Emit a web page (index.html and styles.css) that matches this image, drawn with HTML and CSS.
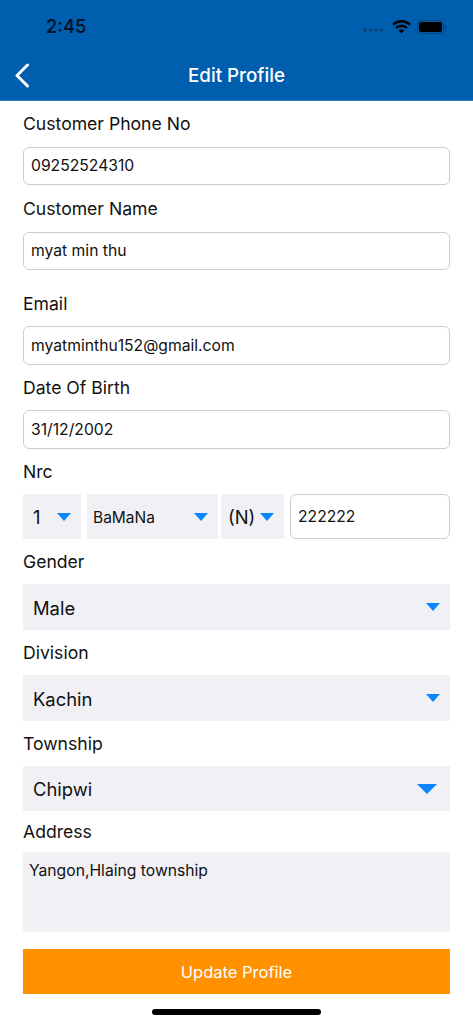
FILE: index.html
```html
<!DOCTYPE html>
<html lang="en">
<head>
<meta charset="utf-8">
<title>Edit Profile</title>
<link rel="stylesheet" href="styles.css">
</head>
<body>
<div class="screen">
  <header class="header">
    <div class="status">
      <span class="time">2:45</span>
      <div class="status-icons">
        <svg class="signal" width="21" height="4" viewBox="0 0 21 4"><g fill="#0f3f72"><circle cx="2" cy="2" r="1.7"/><circle cx="7.5" cy="2" r="1.7"/><circle cx="13" cy="2" r="1.7"/><circle cx="18.5" cy="2" r="1.7"/></g></svg>
        <svg class="wifi" width="19" height="14" viewBox="0 0 19 14"><path d="M1 4.7a12.2 12.2 0 0 1 17 0" fill="none" stroke="#000" stroke-width="2.4"/><path d="M4 8a8 8 0 0 1 11 0" fill="none" stroke="#000" stroke-width="2.4"/><path d="M9.5 13.6 6.6 10.6a4.2 4.2 0 0 1 5.8 0z" fill="#000"/></svg>
        <svg class="battery" width="30" height="14" viewBox="0 0 30 14"><rect x=".5" y=".5" width="26" height="13" rx="3.6" fill="none" stroke="#0f3f72"/><rect x="2" y="2" width="23" height="10" rx="2.2" fill="#000"/><rect x="27.8" y="5" width="1.5" height="4" rx=".7" fill="#0f3f72"/></svg>
      </div>
    </div>
    <div class="navbar">
      <svg class="back" width="16" height="25" viewBox="0 0 16 25"><path d="M13.5 2 3 12.5 13.5 23" fill="none" stroke="#fff" stroke-width="3" stroke-linecap="round" stroke-linejoin="round"/></svg>
      <h1 class="title">Edit Profile</h1>
    </div>
  </header>

  <form class="form">
    <label class="label l-first">Customer Phone No</label>
    <div class="input">09252524310</div>
    <label class="label l-name">Customer Name</label>
    <div class="input">myat min thu</div>
    <label class="label l-email">Email</label>
    <div class="input i-tall">myatminthu152@gmail.com</div>
    <label class="label l-dob">Date Of Birth</label>
    <div class="input i-tall">31/12/2002</div>
    <label class="label l-dob">Nrc</label>
    <div class="nrc">
      <div class="select s-num"><span class="val">1</span><i class="arrow"></i></div>
      <div class="select s-town"><span class="val small">BaMaNa</span><i class="arrow"></i></div>
      <div class="select s-type"><span class="val">(N)</span><i class="arrow"></i></div>
      <div class="input i-nrc">222222</div>
    </div>
    <label class="label l-gender">Gender</label>
    <div class="select s-full"><span class="val">Male</span><i class="arrow"></i></div>
    <label class="label l-gender">Division</label>
    <div class="select s-full"><span class="val">Kachin</span><i class="arrow"></i></div>
    <label class="label l-gender">Township</label>
    <div class="select s-full s-short"><span class="val">Chipwi</span><i class="arrow arrow-big"></i></div>
    <label class="label l-address">Address</label>
    <div class="textarea">Yangon,Hlaing township</div>
    <button class="submit" type="button">Update Profile</button>
  </form>
  <div class="home-wrap"><div class="home-bar"></div></div>
</div>
</body>
</html>
```
FILE: styles.css
```css
* { box-sizing: border-box; }
html, body { margin: 0; padding: 0; background: #fff; }
body { font-family: Inter, "Liberation Sans", sans-serif; color: #111; }
.screen { width: 473px; height: 1024px; overflow: hidden; display: flex; flex-direction: column; }

.header { height: 101px; background: #005eae; border-bottom: 1px solid #2a7cc0; flex: none; }
.status { height: 52px; display: flex; align-items: center; justify-content: space-between; padding: 0 26px 0 46px; }
.time { font-size: 18px; font-weight: 600; color: #05152a; }
.status-icons { display: flex; align-items: center; padding-top: 2px; }
.signal { margin: 5px 8px 0 0; }
.wifi { margin: -1px 6px 0 0; }
.navbar { height: 48px; display: flex; align-items: center; justify-content: center; position: relative; }
.back { position: absolute; left: 14px; top: 11px; }
.title { margin: 0 0 1px; font-size: 18.8px; font-weight: 500; color: #fff; }

.form { padding: 0 23px; display: flex; flex-direction: column; }
.label { display: block; height: 24px; line-height: 24px; font-size: 17.6px; font-weight: 400; color: #111; flex: none; }
.l-first { margin: 11px 0 11px; }
.l-name { margin: 12px 0 11px; }
.l-email { margin: 22px 0 10px; }
.l-dob { margin: 11px 0 10px; }
.l-gender { margin: 11px 0 10px; }
.l-address { margin: 9px 0 8px; }

.input { height: 38px; border: 1.5px solid #cccccf; border-radius: 6px; padding: 0 7px 1px; display: flex; align-items: center; font-size: 15.7px; background: #fff; flex: none; }
.i-tall { height: 39px; }
.i-nrc { height: 45px; width: 160px; margin-left: 6px; }

.nrc { display: flex; height: 45px; flex: none; }
.select { background: #f0f0f5; display: flex; align-items: center; justify-content: space-between; height: 45px; flex: none; }
.val { font-size: 18.4px; color: #111; padding-top: 1px; }
.val.small { font-size: 15.5px; }
.arrow { width: 0; height: 0; border-left: 7.5px solid transparent; border-right: 7.5px solid transparent; border-top: 8px solid #0a84ff; }
.arrow-big { border-left-width: 10px; border-right-width: 10px; border-top-width: 10px; }
.s-num { width: 58px; padding: 0 10px; margin-right: 6px; }
.s-town { width: 131px; padding: 0 10px 0 6px; margin-right: 3px; }
.s-type { width: 63px; padding: 0 10px 0 7px; }
.s-full { height: 46px; padding: 0 10px; }
.s-short { height: 45px; }
.s-short .arrow { margin-right: 3px; }

.textarea { height: 80px; background: #f0f0f5; padding: 9px 6px; font-size: 15.7px; line-height: 20px; flex: none; }
.submit { margin-top: 17px; height: 45px; border: 0; padding: 0; background: #ff9000; color: #fff; font: 400 16.5px Inter, "Liberation Sans", sans-serif; flex: none; }

.home-wrap { display: flex; justify-content: center; padding-top: 15px; }
.home-bar { width: 169px; height: 6px; border-radius: 3px; background: #000; }
```
